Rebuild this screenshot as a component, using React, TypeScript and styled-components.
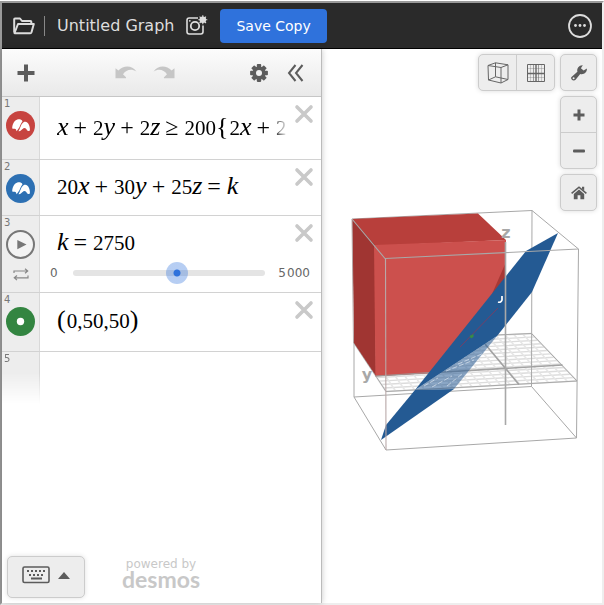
import React, { useState } from 'react';
import styled, { createGlobalStyle, css } from 'styled-components';

const GlobalStyle = createGlobalStyle`
  *, *::before, *::after { box-sizing: border-box; }
  html, body, #root { height: 100%; }
  body { margin: 0; background: #fff; font-family: "DejaVu Sans", sans-serif; color: #666; }
  button { font: inherit; color: inherit; border: 0; padding: 0; margin: 0; background: none; cursor: pointer; }
  svg { display: block; }
`;

const Page = styled.div`
  height: 100%;
  padding-top: 1px;
`;

const Frame = styled.div`
  height: 100%;
  display: flex;
  flex-direction: column;
  border: 2px solid;
  border-color: #9a9a9a #eee #eee #9a9a9a;
`;

const Header = styled.header`
  flex: none;
  height: 46px;
  display: flex;
  align-items: center;
  padding: 0 10px 0 11px;
  background: #2a2a2a;
  border-bottom: 1px solid #000;
  color: #ddd;
`;

const HeaderDivider = styled.span`
  width: 1px;
  height: 20px;
  margin: 0 12px 0 9px;
  background: #888;
`;

const Title = styled.button`
  font-size: 16px;
  line-height: 24px;
  white-space: nowrap;
`;

const SnapshotButton = styled.button`
  margin: 0 12px;
`;

const SaveButton = styled.button`
  height: 34px;
  padding: 0 16px;
  border-radius: 4px;
  background: #2f72dc;
  color: #fff;
  font-size: 14px;
`;

const MoreButton = styled.button`
  margin-left: auto;
`;

const Main = styled.main`
  flex: 1;
  min-height: 0;
  display: flex;
`;

const Panel = styled.section`
  position: relative;
  z-index: 1;
  flex: none;
  width: 320px;
  display: flex;
  flex-direction: column;
  background: #fff;
  border-right: 1px solid #bbb;
  box-shadow: 0 0 6px rgba(0, 0, 0, 0.22);
`;

const Toolbar = styled.div`
  flex: none;
  height: 48px;
  display: flex;
  align-items: center;
  padding: 0 17px 0 15px;
  background: linear-gradient(#fcfcfc, #e9e9e9);
  border-bottom: 1px solid #c6c6c6;
`;

const ToolGroup = styled.div<{ $gap: number; $push?: boolean }>`
  display: flex;
  align-items: center;
  gap: ${p => p.$gap}px;
  margin-left: ${p => (p.$push ? 'auto' : '80px')};
`;

const List = styled.ol`
  flex: 1;
  margin: 0;
  padding: 0;
  list-style: none;
`;

const Row = styled.li`
  display: flex;
  border-bottom: 1px solid #d2d2d2;
`;

const Gutter = styled.div<{ $fade?: boolean }>`
  flex: none;
  width: 38px;
  display: flex;
  flex-direction: column;
  align-items: center;
  background: #ededed;
  border-right: 1px solid #d9d9d9;
  ${p => p.$fade && css`
    height: 52px;
    -webkit-mask-image: linear-gradient(#000 40%, transparent);
    mask-image: linear-gradient(#000 40%, transparent);
  `}
`;

const RowNumber = styled.span`
  align-self: flex-start;
  padding: 1px 0 1px 2px;
  font-size: 10px;
  line-height: 12px;
  color: #777;
`;

const GutterButton = styled.button<{ $color?: string }>`
  width: 29px;
  height: 29px;
  border-radius: 50%;
  background: ${p => p.$color ?? 'transparent'};
`;

const LoopButton = styled.button`
  margin-top: 9px;
`;

const Body = styled.div`
  flex: 1;
  min-width: 0;
  display: flex;
  flex-direction: column;
`;

const FieldLine = styled.div<{ $top: number; $bottom: number }>`
  display: flex;
  align-items: flex-start;
  padding: ${p => p.$top}px 7px ${p => p.$bottom}px 17px;
`;

const Formula = styled.div<{ $fade?: boolean }>`
  flex: 1;
  min-width: 0;
  height: 30px;
  display: flex;
  align-items: baseline;
  white-space: nowrap;
  font-family: "Liberation Serif", serif;
  font-size: 21px;
  line-height: 30px;
  color: #000;
  ${p => p.$fade && css`
    -webkit-mask-image: linear-gradient(90deg, #000 94%, transparent);
    mask-image: linear-gradient(90deg, #000 94%, transparent);
  `}
`;

const Variable = styled.var`
  font-size: 26px;
  line-height: 30px;
  font-style: italic;
`;

const Operator = styled.span`
  font-size: 24px;
  margin: 0 6px 0 5px;
  line-height: 24px;
`;

const Bracket = styled.span`
  font-size: 26px;
  line-height: 24px;
  margin-right: 1px;
`;

const CloseButton = styled.button<{ $raise: number }>`
  margin: ${p => -p.$raise}px 0 0 7px;
`;

const SliderLine = styled.div`
  display: flex;
  align-items: center;
  padding: 0 11px 8px 10px;
  font-size: 12px;
  line-height: 22px;
`;

const Slider = styled.input`
  flex: 1;
  min-width: 0;
  height: 22px;
  margin: 0 13px 0 15px;
  appearance: none;
  background: transparent;
  &::-webkit-slider-runnable-track {
    height: 6px;
    border-radius: 3px;
    background: #e4e4e4;
  }
  &::-webkit-slider-thumb {
    appearance: none;
    width: 22px;
    height: 22px;
    margin-top: -8px;
    border-radius: 50%;
    background: radial-gradient(circle, #2f72dc 3px, rgba(47, 114, 220, 0.35) 4px);
  }
`;

const Footer = styled.footer`
  flex: none;
  display: flex;
  align-items: center;
  padding: 0 5px 5px;
`;

const KeypadButton = styled.button`
  display: flex;
  align-items: center;
  justify-content: center;
  gap: 8px;
  width: 78px;
  height: 42px;
  padding-bottom: 4px;
  background: #ededed;
  border: 1px solid #ccc;
  border-radius: 5px;
  box-shadow: 0 0 5px rgba(0, 0, 0, 0.12);
`;

const Brand = styled.a`
  margin: 0 0 10px 37px;
  text-align: center;
  text-decoration: none;
  color: #c8c8c8;
`;

const BrandNote = styled.span`
  display: block;
  font-size: 12px;
  line-height: 14px;
`;

const BrandName = styled.span`
  display: block;
  font-family: Lato, sans-serif;
  font-size: 23px;
  font-weight: 700;
  line-height: 16px;
`;

const GraphPane = styled.section`
  position: relative;
  flex: 1;
  min-width: 0;
`;

const Scene = styled.svg`
  width: 100%;
  height: 100%;
`;

const GraphTools = styled.div`
  position: absolute;
  top: 5px;
  right: 5px;
  display: flex;
  align-items: flex-start;
  gap: 5px;
`;

const ToolColumn = styled.div`
  display: flex;
  flex-direction: column;
  gap: 5px;
`;

const ButtonGroup = styled.div<{ $vertical?: boolean }>`
  display: flex;
  flex-direction: ${p => (p.$vertical ? 'column' : 'row')};
  background: #ededed;
  border: 1px solid #ccc;
  border-radius: 5px;
  box-shadow: 0 0 5px rgba(0, 0, 0, 0.14);
  button + button {
    ${p => (p.$vertical
      ? css`border-top: 1px solid #ccc; height: 36px;`
      : css`border-left: 1px solid #ccc; width: 38px;`)}
  }
`;

const GraphButton = styled.button<{ $wide?: boolean }>`
  display: flex;
  align-items: center;
  justify-content: center;
  width: ${p => (p.$wide ? 37 : 35)}px;
  height: 35px;
`;

const FolderIcon = () => (
  <svg width="22" height="18" viewBox="0 0 22 18" fill="none" stroke="#ddd" strokeWidth="2" strokeLinejoin="round">
    <path d="M1.2 15.5V2.2Q1.2 1.5 2 1.5H7L9 4H17.5Q18.3 4 18.3 4.8V7" />
    <path d="M1.5 16L5 7H20.8L18.5 15.3Q18.2 16.2 17.3 16.2H2Z" />
  </svg>
);

const SnapshotIcon = () => (
  <svg width="22" height="22" viewBox="0 0 22 22" fill="none" stroke="#ddd">
    <path d="M12 3H3.2Q1 3 1 5.2V16.8Q1 19 3.2 19H14.8Q17 19 17 16.8V10.5" strokeWidth="1.6" />
    <circle cx="9" cy="11" r="4.2" strokeWidth="1.8" />
    <circle cx="16.8" cy="4.8" r="3.3" fill="#ddd" stroke="none" />
    <path d="M16.8 .3V9.3M12.3 4.8H21.3M13.6 1.6L20 8M20 1.6L13.6 8" strokeWidth="1.1" />
    <circle cx="3.8" cy="5.8" r=".9" fill="#ddd" stroke="none" />
  </svg>
);

const MoreIcon = () => (
  <svg width="24" height="24" viewBox="0 0 24 24" fill="#ddd">
    <circle cx="12" cy="12" r="11" fill="none" stroke="#ddd" strokeWidth="1.8" />
    <circle cx="7.5" cy="11.5" r="1.4" /><circle cx="12" cy="11.5" r="1.4" /><circle cx="16.5" cy="11.5" r="1.4" />
  </svg>
);

const PlusIcon = ({ size = 18, weight = 4 }: { size?: number; weight?: number }) => (
  <svg width={size} height={size} viewBox={`0 0 ${size} ${size}`} stroke="#5c5c5c" strokeWidth={weight} strokeLinecap="butt">
    <path d={`M${size / 2} .5V${size - 0.5}M.5 ${size / 2}H${size - 0.5}`} />
  </svg>
);

const UndoIcon = ({ flip }: { flip?: boolean }) => (
  <svg width="22" height="13" viewBox="0 0 22 13" fill="#c6c6c6">
    <path
      transform={flip ? 'translate(22 0) scale(-1 1)' : undefined}
      d="M.5 2.2L3.4 4.6C8.8-1.2 17.2-.6 21.4 5.5C16.6 2.3 11.2 3.4 8 8.3L11 11.3Q11.3 12.3 10.4 12.3H.8Q.5 12.3 .5 12Z"
    />
  </svg>
);

const GearIcon = () => (
  <svg width="18" height="18" viewBox="-9 -9 18 18">
    <g fill="#5c5c5c">
      {[0, 45, 90, 135].map(a => (
        <rect key={a} x="-2.2" y="-8.9" width="4.4" height="17.8" rx=".8" transform={`rotate(${a})`} />
      ))}
      <circle r="6.6" />
    </g>
    <circle r="3" fill="#f1f1f1" />
  </svg>
);

const CollapseIcon = () => (
  <svg width="17" height="18" viewBox="0 0 17 18" fill="none" stroke="#5c5c5c" strokeWidth="2">
    <path d="M8.5 1L2 9L8.5 17M15.5 1L9 9L15.5 17" />
  </svg>
);

const CloseIcon = () => (
  <svg width="20" height="20" viewBox="0 0 20 20" stroke="#c9c9c9" strokeWidth="3.6" strokeLinecap="round">
    <path d="M3 3L17 17M17 3L3 17" />
  </svg>
);

const SurfaceIcon = () => (
  <svg width="29" height="29" viewBox="0 0 29 29" fill="#fff">
    <path d="M6.2 16.4C6.7 12.4 8.8 9 12 8.3C13.7 8 15.8 8.6 16.5 10.2C14.7 12.5 14.3 14.4 13.3 16.4C12.3 18 11.5 19.1 10.4 20.2C10.4 18.9 9.9 17.7 8.5 17.8C7.2 17.9 6.2 18 6.2 16.4Z" />
    <path d="M12.5 20.2C14.4 17.5 14.4 13.8 17.5 11.3C19.8 10 22.1 11.5 23.1 14.3C23.7 16 24.2 18 23.8 19.4C23 20.2 21.8 20.2 21 19.3C20.3 17.8 19.1 16.8 17.6 17.2C16.2 18 14.6 20.4 12.5 20.2Z" />
  </svg>
);

const PointIcon = () => (
  <svg width="29" height="29" viewBox="0 0 29 29"><circle cx="14.5" cy="14.5" r="3.7" fill="#fff" /></svg>
);

const PlayIcon = () => (
  <svg width="29" height="29" viewBox="0 0 29 29">
    <circle cx="14.5" cy="14.5" r="13.5" fill="#f3f3f3" stroke="#777" strokeWidth="2" />
    <path d="M11.3 10L20.5 14.5L11.3 19.3Z" fill="#777" />
  </svg>
);

const LoopIcon = () => (
  <svg width="16" height="13" viewBox="0 0 16 13" fill="none" stroke="#888" strokeWidth="1.2">
    <path d="M1 5V3H14.5M12 .7L14.7 3L12 5.3M15 7.5V9.8H1.5M4 7.5L1.3 9.8L4 12.1" />
  </svg>
);

const KeyboardIcon = () => (
  <svg width="28" height="18" viewBox="0 0 28 18" fill="#5c5c5c">
    <rect x="1" y="1" width="26" height="15.5" rx="1.5" fill="none" stroke="#5c5c5c" strokeWidth="1.6" />
    {[5, 9, 13, 17, 21].map(x => <rect key={x} x={x} y="4" width="2" height="2" />)}
    {[7, 11, 15, 19].map(x => <rect key={x} x={x} y="8" width="2" height="2" />)}
    <rect x="9" y="11.5" width="11" height="2" />
  </svg>
);

const CaretIcon = () => (
  <svg width="12" height="8" viewBox="0 0 12 8" fill="#5c5c5c"><path d="M0 8L6 1L12 8Z" /></svg>
);

const CubeIcon = () => (
  <svg width="22" height="22" viewBox="0 0 22 22" fill="none" stroke="#666" strokeWidth="1">
    <path d="M1 3.5L14 5.5V21L1.5 18ZM1 3.5L8.5 .8L21 2.8L14 5.5M21 2.8V17.5L14 21M8.5 .8V14.8L1.5 18M8.5 14.8L21 17.5" />
  </svg>
);

const PlaneIcon = () => (
  <svg width="20" height="20" viewBox="0 0 20 20" fill="none" stroke="#666">
    <path d="M1.5 1.5H18.5V18.5H1.5Z" />
    <path d="M4.5 1V19M15.5 1V19M1 5.5H19M1 14.5H19" strokeOpacity=".3" />
    <path d="M7.5 1V19M12.5 1V19" strokeOpacity=".6" />
    <path d="M10 1V19M1 10.5H19" strokeWidth="1.4" />
  </svg>
);

const WrenchIcon = () => (
  <svg width="18" height="18" viewBox="0 0 18 18">
    <path
      fill="#5c5c5c" fillRule="evenodd"
      d="M12.8 1.2L10.9 4.3L13.6 6.4L16.9 4.6C17.2 8.3 14.1 11 10.2 10.1L5.6 15.8C3.8 17.6.4 15.8 1.2 13.3L7.4 7.8C6.6 4 9.2 .9 12.8 1.2ZM3.6 13.2A1 1 0 1 0 3.6 15.2A1 1 0 1 0 3.6 13.2Z"
    />
  </svg>
);

const MinusIcon = () => (
  <svg width="12" height="12" viewBox="0 0 12 12"><rect y="4.5" width="12" height="3" rx="1" fill="#5c5c5c" /></svg>
);

const HomeIcon = () => (
  <svg width="16" height="14" viewBox="0 0 16 14">
    <path d="M2.8 8L8 3.4L13.2 8V13.2H9.4V9.2H6.6V13.2H2.8Z" fill="#5c5c5c" />
    <path d="M.6 7.4L8 1.2L15.4 7.4" fill="none" stroke="#5c5c5c" strokeWidth="1.6" />
    <path d="M11 .8H13.2V4.6L11 2.8Z" fill="#5c5c5c" />
  </svg>
);

type Point = [number, number];

/* Corners of the z = 0 plane, in drawing order round the floor. */
const FLOOR: Point[] = [[354, 343], [531.5, 333.5], [577, 381], [386, 391.5]];

const mix = (a: Point, b: Point, t: number): Point => [a[0] + (b[0] - a[0]) * t, a[1] + (b[1] - a[1]) * t];
const segment = (a: Point, b: Point) => `M${a.join(' ')}L${b.join(' ')}`;

const STEPS = Array.from({ length: 21 }, (_, i) => i / 20);
const ROW_STEPS = Array.from({ length: 15 }, (_, i) => i / 14);
const ROW_LINES = ROW_STEPS.map(t => segment(mix(FLOOR[0], FLOOR[3], t), mix(FLOOR[1], FLOOR[2], t))).join('');
const COLUMN_LINES = STEPS.map(t => segment(mix(FLOOR[0], FLOOR[1], t), mix(FLOOR[3], FLOOR[2], t))).join('');

const Graph3D = () => (
  <Scene viewBox="322 49 280 554" role="img" aria-label="3D graph">
    <polygon points={FLOOR.map(p => p.join(',')).join(' ')} fill="#fff" />
    <path d={ROW_LINES} stroke="#dcdcdc" strokeWidth="1.4" fill="none" />
    <path d={COLUMN_LINES} stroke="#e6e6e6" strokeWidth="1.6" fill="none" />
    <g stroke="#a8a8a8" strokeWidth="1" fill="none">
      <path d="M354 343L386 391.5L577 381L531.5 333.5L495 335" />
      <path d="M354 343V397L386 450L576.5 438L531.5 386.5L354 397" />
      <path d="M532 210.5L531.5 386.5" />
      <path d="M352 219L532 210.5L578.5 249L576.5 438" />
    </g>
    <path d="M376 376L562.5 365M485 344L519 384.5" stroke="#a2a2a2" strokeWidth="1.6" />

    <polygon points="352,219 478,213.5 506,240 374,246" fill="#b83f3b" />
    <polygon points="352,219 375,245 376,376 354,343" fill="#a03532" />
    <polygon points="374,245 506,240 506,280 434,373 375.5,376" fill="#cc504d" />
    <polygon points="506,262 506,280 492,294" fill="#a83835" />
    <path d="M375 376L430 372.5" stroke="#a2908f" strokeWidth="1" />

    <polygon points="415,390 454,389 497,336" fill="#2a5c96" fillOpacity=".55" />
    <polygon points="558,233 526,251 415,390 497,336 532,292" fill="#245a93" />
    <polygon points="415,390 454,389 381,440 386,425" fill="#245a93" />
    <path d="M424 386L438 378M432 387L452 376M447 386L462 374M446 371L474 360M458 364L484 353" stroke="#dde6ef" strokeWidth="1" strokeDasharray="5 2" strokeOpacity=".7" />
    <path d="M460 347L498 308" stroke="#763f66" strokeWidth="1" />
    <path d="M502 296V300Q501 303 498 302" stroke="#fff" strokeWidth="1.7" fill="none" />
    <path d="M469.5 336L473.5 334V337L471 338.5Z" fill="#388c46" />

    <g stroke="#a8a8a8" strokeWidth="1.1" fill="none">
      <path d="M352 219L385 258.5L578.5 249" />
      <path d="M385.5 258.5L386 450" stroke="#b8a8a8" />
      <path d="M352 219L353.5 343" stroke="#b5a5a5" strokeWidth="1" />
    </g>
    <path d="M505.5 242V425" stroke="#a8a8a8" strokeWidth="1.6" />
    <g fill="#a8a8a8" fontFamily="DejaVu Sans, sans-serif" fontSize="16" fontWeight="700" textAnchor="middle">
      <text x="506" y="238">z</text>
      <text x="367" y="380">y</text>
    </g>
  </Scene>
);

interface ExpressionProps {
  number: number;
  top: number;
  bottom: number;
  gutter: React.ReactNode;
  fade?: boolean;
  children: React.ReactNode;
  extra?: React.ReactNode;
}

const Expression = ({ number, top, bottom, gutter, fade, children, extra }: ExpressionProps) => (
  <Row>
    <Gutter><RowNumber>{number}</RowNumber>{gutter}</Gutter>
    <Body>
      <FieldLine $top={top} $bottom={bottom}>
        <Formula $fade={fade}>{children}</Formula>
        <CloseButton $raise={top - 7} aria-label={`Delete expression ${number}`}><CloseIcon /></CloseButton>
      </FieldLine>
      {extra}
    </Body>
  </Row>
);

export default function App() {
  const [k, setK] = useState(2750);

  return (
    <>
      <GlobalStyle />
      <Page>
        <Frame>
          <Header>
            <button aria-label="Open graph"><FolderIcon /></button>
            <HeaderDivider />
            <Title>Untitled Graph</Title>
            <SnapshotButton aria-label="Take snapshot"><SnapshotIcon /></SnapshotButton>
            <SaveButton>Save Copy</SaveButton>
            <MoreButton aria-label="More options"><MoreIcon /></MoreButton>
          </Header>
          <Main>
            <Panel>
              <Toolbar>
                <button aria-label="Add item"><PlusIcon /></button>
                <ToolGroup $gap={16}>
                  <button aria-label="Undo"><UndoIcon /></button>
                  <button aria-label="Redo"><UndoIcon flip /></button>
                </ToolGroup>
                <ToolGroup $gap={19} $push>
                  <button aria-label="Edit list"><GearIcon /></button>
                  <button aria-label="Hide list"><CollapseIcon /></button>
                </ToolGroup>
              </Toolbar>
              <List>
                <Expression number={1} top={15} bottom={17} fade
                  gutter={<GutterButton $color="#c74440" aria-label="Hide expression 1"><SurfaceIcon /></GutterButton>}>
                  <Variable>x</Variable><Operator>+</Operator>2<Variable>y</Variable><Operator>+</Operator>2<Variable>z</Variable>
                  <Operator>≥</Operator>200<Bracket>{'{'}</Bracket>2<Variable>x</Variable><Operator>+</Operator>2
                </Expression>
                <Expression number={2} top={11} bottom={14}
                  gutter={<GutterButton $color="#2d70b3" aria-label="Hide expression 2"><SurfaceIcon /></GutterButton>}>
                  20<Variable>x</Variable><Operator>+</Operator>30<Variable>y</Variable><Operator>+</Operator>25<Variable>z</Variable>
                  <Operator>=</Operator><Variable>k</Variable>
                </Expression>
                <Expression number={3} top={11} bottom={5}
                  gutter={
                    <>
                      <GutterButton aria-label="Play slider"><PlayIcon /></GutterButton>
                      <LoopButton aria-label="Loop mode"><LoopIcon /></LoopButton>
                    </>
                  }
                  extra={
                    <SliderLine>
                      <span>0</span>
                      <Slider type="range" aria-label="k" min={0} max={5000} value={k} onChange={e => setK(Number(e.target.value))} />
                      <span>5{'\u200a'}000</span>
                    </SliderLine>
                  }>
                  <Variable>k</Variable><Operator>=</Operator>{k}
                </Expression>
                <Expression number={4} top={13} bottom={15}
                  gutter={<GutterButton $color="#338541" aria-label="Hide expression 4"><PointIcon /></GutterButton>}>
                  <Bracket>(</Bracket>0,50,50<Bracket>)</Bracket>
                </Expression>
                <li><Gutter $fade><RowNumber>5</RowNumber></Gutter></li>
              </List>
              <Footer>
                <KeypadButton aria-label="Show keypad"><KeyboardIcon /><CaretIcon /></KeypadButton>
                <Brand href="#">
                  <BrandNote>powered by</BrandNote>
                  <BrandName>desmos</BrandName>
                </Brand>
              </Footer>
            </Panel>
            <GraphPane>
              <Graph3D />
              <GraphTools>
                <ButtonGroup>
                  <GraphButton $wide aria-label="Toggle box"><CubeIcon /></GraphButton>
                  <GraphButton $wide aria-label="Toggle plane"><PlaneIcon /></GraphButton>
                </ButtonGroup>
                <ToolColumn>
                  <ButtonGroup><GraphButton aria-label="Graph settings"><WrenchIcon /></GraphButton></ButtonGroup>
                  <ButtonGroup $vertical>
                    <GraphButton aria-label="Zoom in"><PlusIcon size={12} weight={3} /></GraphButton>
                    <GraphButton aria-label="Zoom out"><MinusIcon /></GraphButton>
                  </ButtonGroup>
                  <ButtonGroup><GraphButton aria-label="Default view"><HomeIcon /></GraphButton></ButtonGroup>
                </ToolColumn>
              </GraphTools>
            </GraphPane>
          </Main>
        </Frame>
      </Page>
    </>
  );
}
